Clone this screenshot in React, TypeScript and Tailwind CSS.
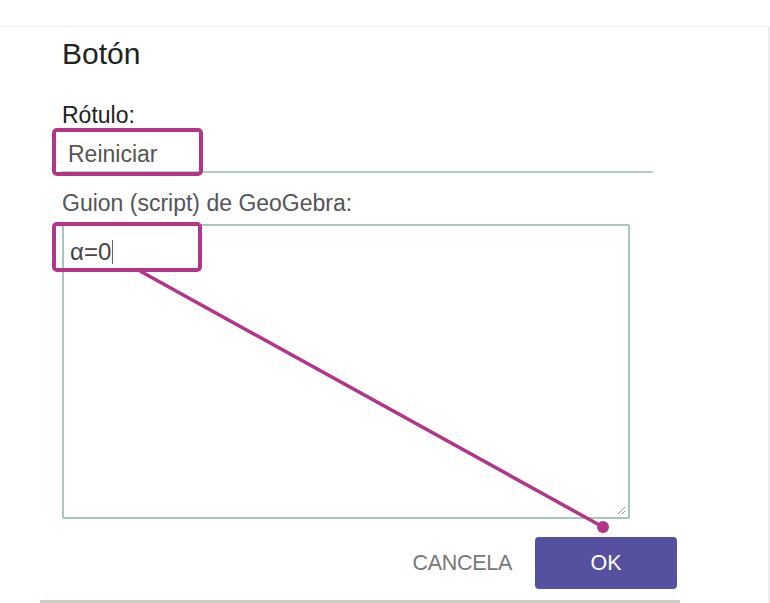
export default function App() {
  return (
    <div className="relative h-[603px] w-[770px] overflow-hidden bg-white font-['Liberation_Sans',Arial,sans-serif]">
      <div className="h-[27px] border-b border-[#f1f1f1]" />
      <div className="h-[576px] border-r-2 border-[#eeeeee] pl-[62px] pr-[90px]">
        <h1 className="pt-[9px] text-[30px] leading-[36px] text-[#222]">Botón</h1>

        <label className="mt-[30px] block text-[23px] leading-[26px] text-[#222]">Rótulo:</label>
        <div className="mt-[12px] w-[591px] border-b-2 border-[#b2cec6] pb-[3px] pl-[6px] text-[23px] leading-[28px] text-[#555]">
          Reiniciar
        </div>

        <label className="mt-[17px] block text-[23px] leading-[26px] text-[#555]">Guion (script) de GeoGebra:</label>
        <div className="relative mt-[8px] h-[295px] w-[568px] rounded-[2px] border-2 border-[#a9c6be] px-[6px] pt-[10px] text-[24px] leading-[28px] text-[#444]">
          <span>α=0</span>
          <span className="ml-[1px] inline-block h-[24px] w-px translate-y-[4px] bg-[#666]" />
          <svg className="absolute bottom-[2px] right-[2px]" width="9" height="9" viewBox="0 0 9 9">
            <path d="M8 1L1 8M8 5L5 8" stroke="#999" strokeWidth="1" />
          </svg>
        </div>

        <div className="mt-[18px] flex w-[615px] items-center justify-end gap-[23px]">
          <button className="text-[21.5px] tracking-[-0.3px] text-[#777]">CANCELA</button>
          <button className="h-[52px] w-[142px] rounded-[4px] bg-[#5550a0] text-[21.5px] text-white">OK</button>
        </div>
      </div>
      <div className="absolute bottom-0 left-[40px] h-[3px] w-[640px] bg-[#cfcbc2]" />

      {/* annotations */}
      <div className="absolute left-[52px] top-[128px] h-[48px] w-[151px] rounded-[5px] border-[4px] border-[#b2358a]" />
      <div className="absolute left-[52px] top-[222px] h-[50px] w-[150px] rounded-[5px] border-[4px] border-[#b2358a]" />
      <svg className="absolute left-0 top-0" width="770" height="603">
        <line x1="140" y1="271" x2="603" y2="527" stroke="#b2358a" strokeWidth="3.5" />
        <circle cx="603" cy="527" r="6" fill="#b2358a" />
      </svg>
    </div>
  );
}
